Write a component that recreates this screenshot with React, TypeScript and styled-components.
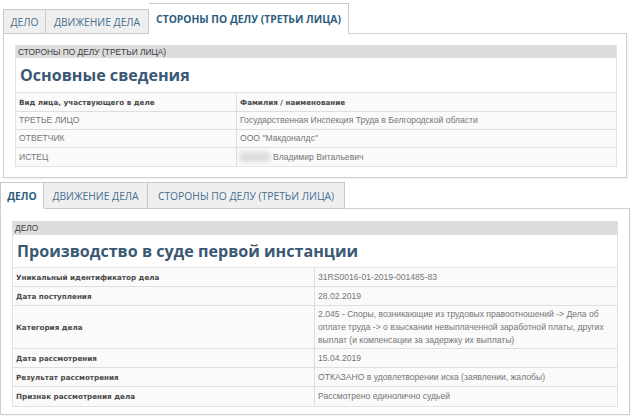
import React from "react";
import styled, { createGlobalStyle } from "styled-components";

const Global = createGlobalStyle`
  html, body { margin: 0; padding: 0; background: #ffffff; }
  body { font-family: "Liberation Sans", Arial, sans-serif; color: #555; }
`;

const Page = styled.div`
  width: 631px;
  height: 416px;
  overflow: hidden;
  display: flex;
  flex-direction: column;
  padding-top: 3px;
  box-sizing: border-box;
`;

const Section = styled.section<{ $left: number; $width: number; $gap?: number }>`
  margin-left: ${(p) => p.$left}px;
  width: ${(p) => p.$width}px;
  margin-top: ${(p) => p.$gap ?? 0}px;
  display: flex;
  flex-direction: column;
`;

const TabBar = styled.div`
  display: flex;
  align-items: flex-end;
  position: relative;
  z-index: 2;
  margin-bottom: -1px;
`;

const Tab = styled.div<{ $active?: boolean; $h: number; $w: number }>`
  box-sizing: border-box;
  height: ${(p) => p.$h}px;
  width: ${(p) => p.$w}px;
  display: flex;
  align-items: center;
  justify-content: center;
  font-family: "Open Sans", "Liberation Sans", sans-serif;
  font-size: 10.3px;
  font-weight: ${(p) => (p.$active ? 700 : 400)};
  color: ${(p) => (p.$active ? "#2e5d7d" : "#46708f")};
  background: ${(p) => (p.$active ? "#ffffff" : "#efefef")};
  border: 1px solid #c9c9c9;
  border-left-width: 0;
  border-bottom-color: ${(p) => (p.$active ? "#ffffff" : "#c9c9c9")};
  &:first-child {
    border-left-width: 1px;
  }
`;

const Panel = styled.div<{ $pad: string; $h: number }>`
  box-sizing: border-box;
  height: ${(p) => p.$h}px;
  border: 1px solid #cfcfcf;
  padding: ${(p) => p.$pad};
  background: #ffffff;
  box-shadow: 1px 1px 2px rgba(0, 0, 0, 0.06);
`;

const Inner = styled.div`
  border: 1px solid #e2e2e2;
  border-top: none;
  background: #ffffff;
`;

const HeaderBar = styled.div<{ $h: number }>`
  height: ${(p) => p.$h}px;
  background: #dddddd;
  display: flex;
  align-items: center;
  padding-left: 2px;
  font-size: 8.4px;
  color: #3a3a3a;
  text-transform: uppercase;
`;

const Title = styled.h2<{ $h: number }>`
  margin: 0;
  height: ${(p) => p.$h}px;
  display: flex;
  align-items: center;
  padding-left: 4px;
  font-family: "Open Sans", "Liberation Sans", sans-serif;
  font-weight: 700;
  font-size: 16.1px;
  color: #3a5873;
  border-bottom: 1px solid #e2e2e2;
`;

const Table = styled.div<{ $cols: string }>`
  display: grid;
  grid-template-columns: ${(p) => p.$cols};
  background: #fafafa;
`;

const Cell = styled.div<{ $h: number; $bold?: boolean; $last?: boolean }>`
  box-sizing: border-box;
  min-height: ${(p) => p.$h}px;
  display: flex;
  align-items: center;
  padding: 0 3px;
  border-bottom: ${(p) => (p.$last ? "none" : "1px solid #dedede")};
  font-family: ${(p) =>
    p.$bold ? '"DejaVu Sans", Verdana, sans-serif' : '"Liberation Sans", Arial, sans-serif'};
  font-size: ${(p) => (p.$bold ? "7.2px" : "8.6px")};
  font-weight: ${(p) => (p.$bold ? 700 : 400)};
  color: ${(p) => (p.$bold ? "#4a4a4a" : "#767676")};
  line-height: 13px;
  &:nth-child(2n) {
    border-left: 1px solid #dedede;
  }
`;

const Blur = styled.span`
  display: inline-block;
  width: 30px;
  height: 10px;
  background: #dcdcdc;
  filter: blur(2px);
  margin-right: 3px;
`;

type Row = { k: React.ReactNode; v: React.ReactNode; h?: number };

const partyRows: Row[] = [
  { k: "ТРЕТЬЕ ЛИЦО", v: "Государственная Инспекция Труда в Белгородской области" },
  { k: "ОТВЕТЧИК", v: 'ООО "Макдоналдс"' },
  {
    k: "ИСТЕЦ",
    v: (
      <>
        <Blur />
        Владимир Витальевич
      </>
    ),
  },
];

const caseRows: Row[] = [
  { k: "Уникальный идентификатор дела", v: "31RS0016-01-2019-001485-83" },
  { k: "Дата поступления", v: "28.02.2019" },
  {
    k: "Категория дела",
    v: "2.045 - Споры, возникающие из трудовых правоотношений -> Дела об оплате труда -> о взыскании невыплаченной заработной платы, других выплат (и компенсации за задержку их выплаты)",
    h: 43,
  },
  { k: "Дата рассмотрения", v: "15.04.2019" },
  { k: "Результат рассмотрения", v: "ОТКАЗАНО в удовлетворении иска (заявлении, жалобы)" },
  { k: "Признак рассмотрения дела", v: "Рассмотрено единолично судьей" },
];

export default function App() {
  return (
    <Page>
      <Global />
      <Section $left={3} $width={624}>
        <TabBar>
          <Tab $h={25} $w={43}>ДЕЛО</Tab>
          <Tab $h={25} $w={103}>ДВИЖЕНИЕ ДЕЛА</Tab>
          <Tab $h={31} $w={200} $active>
            СТОРОНЫ ПО ДЕЛУ (ТРЕТЬИ ЛИЦА)
          </Tab>
        </TabBar>
        <Panel $pad="11px 9px 0 11px" $h={145}>
          <Inner>
            <HeaderBar $h={13}>Стороны по делу (третьи лица)</HeaderBar>
            <Title $h={34}>Основные сведения</Title>
            <Table $cols="220px 1fr">
              <Cell $h={19} $bold>
                Вид лица, участвующего в деле
              </Cell>
              <Cell $h={19} $bold>
                Фамилия / наименование
              </Cell>
              {partyRows.map((r, i) => (
                <React.Fragment key={i}>
                  <Cell $h={18} $last={i === partyRows.length - 1}>{r.k}</Cell>
                  <Cell $h={18} $last={i === partyRows.length - 1}>{r.v}</Cell>
                </React.Fragment>
              ))}
            </Table>
          </Inner>
        </Panel>
      </Section>

      <Section $left={0} $width={630} $gap={4}>
        <TabBar>
          <Tab $h={27} $w={44} $active>
            ДЕЛО
          </Tab>
          <Tab $h={27} $w={104}>ДВИЖЕНИЕ ДЕЛА</Tab>
          <Tab $h={27} $w={197}>СТОРОНЫ ПО ДЕЛУ (ТРЕТЬИ ЛИЦА)</Tab>
        </TabBar>
        <Panel $pad="12px 11px 0 11px" $h={207}>
          <Inner>
            <HeaderBar $h={14}>Дело</HeaderBar>
            <Title $h={32}>Производство в суде первой инстанции</Title>
            <Table $cols="301px 1fr">
              {caseRows.map((r, i) => (
                <React.Fragment key={i}>
                  <Cell $h={r.h ?? 19} $bold $last={i === caseRows.length - 1}>
                    {r.k}
                  </Cell>
                  <Cell $h={r.h ?? 19} $last={i === caseRows.length - 1}>
                    {r.v}
                  </Cell>
                </React.Fragment>
              ))}
            </Table>
          </Inner>
        </Panel>
      </Section>
    </Page>
  );
}
